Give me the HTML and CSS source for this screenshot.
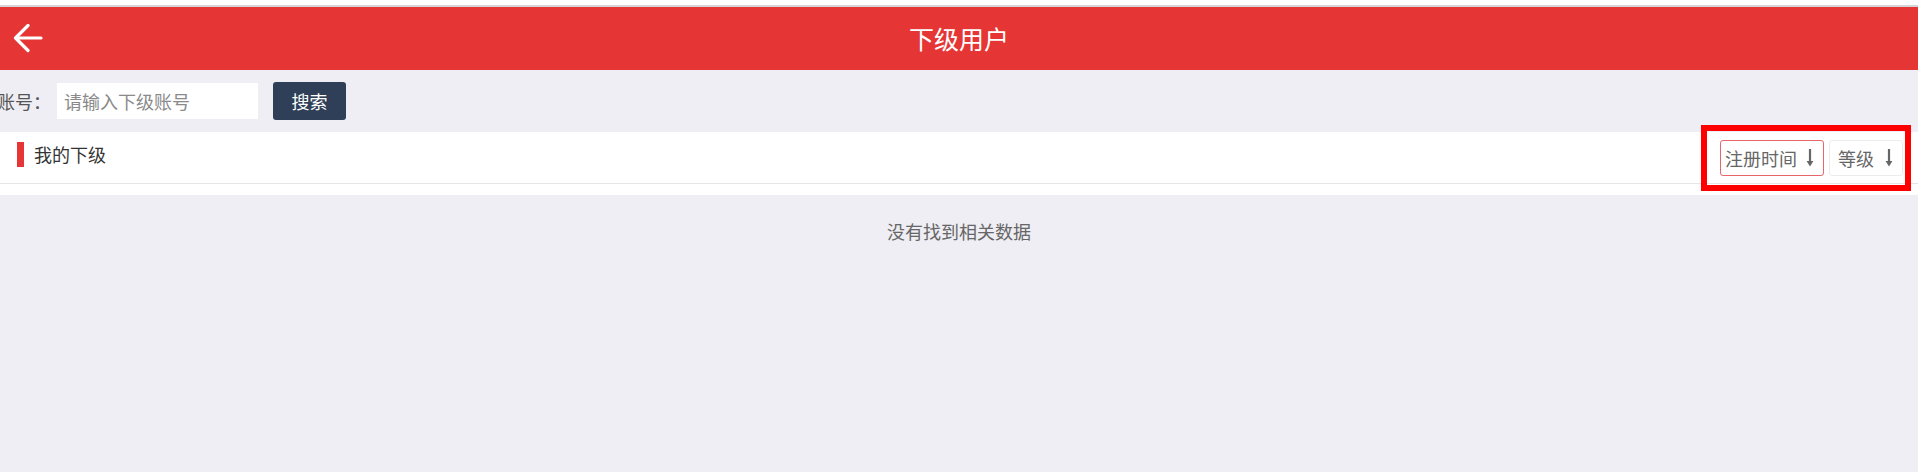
FILE: index.html
```html
<!DOCTYPE html>
<html lang="zh-CN">
<head>
<meta charset="utf-8">
<title>下级用户</title>
<link rel="stylesheet" href="styles.css">
</head>
<body>
<div class="topstrip"></div>
<header class="header">
  <div class="back">
    <svg width="30" height="30" viewBox="0 0 30 30"><path d="M28 14 H3 M15 1.5 L2.5 14 L15 26.5" fill="none" stroke="#fff" stroke-width="3.2" stroke-linecap="round" stroke-linejoin="round"/></svg>
  </div>
  <h1 class="title">下级用户</h1>
  <div></div>
</header>
<div class="search">
  <span class="label">账号：</span>
  <input class="input" type="text" placeholder="请输入下级账号">
  <button class="btn">搜索</button>
</div>
<section class="panel">
  <div class="panel-head">
    <div class="panel-title"><span class="bar"></span><span class="panel-name">我的下级</span></div>
    <div class="sorts">
      <span class="sort sort-active">注册时间<svg class="arr" width="8" height="18" viewBox="0 0 8 18"><path d="M4 0 V14" fill="none" stroke="#666" stroke-width="2.2"/><path d="M0.6 12 L4 17.5 L7.4 12 Z" fill="#666"/></svg></span>
      <span class="sort sort-level">等级<svg class="arr" width="8" height="18" viewBox="0 0 8 18"><path d="M4 0 V14" fill="none" stroke="#666" stroke-width="2.2"/><path d="M0.6 12 L4 17.5 L7.4 12 Z" fill="#666"/></svg></span>
    </div>
  </div>
  <div class="panel-body"></div>
</section>
<p class="empty">没有找到相关数据</p>
<div class="mark"></div>
</body>
</html>
```

FILE: styles.css
```css
html, body {
  margin: 0;
  padding: 0;
}
body {
  background: #efeef4;
  font-family: "Noto Sans CJK SC", "Microsoft YaHei", sans-serif;
  font-size: 18px;
  color: #333;
  overflow: hidden;
}
.topstrip {
  height: 5px;
  background: #fff;
  border-bottom: 2px solid #d5d5d8;
}
.header {
  height: 63px;
  background: #e53535;
  display: grid;
  grid-template-columns: 1fr auto 1fr;
  align-items: center;
}
.back {
  padding-left: 13px;
  display: flex;
  align-items: center;
  padding-top: 1px;
}
.title {
  margin: 0;
  font-size: 25px;
  font-weight: normal;
  color: #fff;
  line-height: 1;
}
.search {
  height: 62px;
  display: flex;
  align-items: center;
}
.label {
  margin-left: -3px;
  color: #555;
  font-size: 18px;
  width: 56px;
  white-space: nowrap;
}
.input {
  margin-left: 4px;
  width: 201px;
  height: 36px;
  box-sizing: border-box;
  border: none;
  outline: none;
  padding: 0 0 0 7px;
  font-family: inherit;
  font-size: 18px;
  color: #333;
  background: #fff;
}
.input::placeholder {
  color: #8a8a8a;
}
.btn {
  margin-left: 15px;
  width: 73px;
  height: 38px;
  border: none;
  border-radius: 3px;
  background: #2e3f57;
  color: #fff;
  font-family: inherit;
  font-size: 18px;
  padding: 0;
}
.panel {
  background: #fff;
  padding-bottom: 11px;
}
.panel-head {
  height: 51px;
  border-bottom: 1px solid #e6e6e8;
  display: flex;
  align-items: center;
  justify-content: space-between;
  padding: 0 15px 0 17px;
}
.panel-title {
  display: flex;
  align-items: center;
  color: #333;
  padding-bottom: 6px;
}
.bar {
  width: 7px;
  height: 25px;
  background: #e53535;
  margin-right: 10px;
}
.panel-name {
  line-height: 25px;
}
.sorts {
  display: flex;
  align-items: center;
  gap: 5px;
  padding-top: 1px;
}
.sort {
  box-sizing: border-box;
  height: 36px;
  display: flex;
  align-items: center;
  border: 1px solid #ececec;
  border-radius: 3px;
  color: #666;
  font-size: 18px;
  background: #fff;
}
.sort-active {
  width: 104px;
  padding-left: 4px;
  border-color: #e8666a;
}
.sort-level {
  width: 74px;
  padding-left: 8px;
}
.arr {
  margin-left: 9px;
}
.sort-level .arr {
  margin-left: 11px;
}
.empty {
  margin: 0;
  padding-top: 23px;
  line-height: 26px;
  text-align: center;
  color: #666;
  font-size: 18px;
}
.mark {
  position: absolute;
  left: 1701px;
  top: 125px;
  width: 210px;
  height: 66px;
  box-sizing: border-box;
  border: 6px solid #ff0000;
}
```
